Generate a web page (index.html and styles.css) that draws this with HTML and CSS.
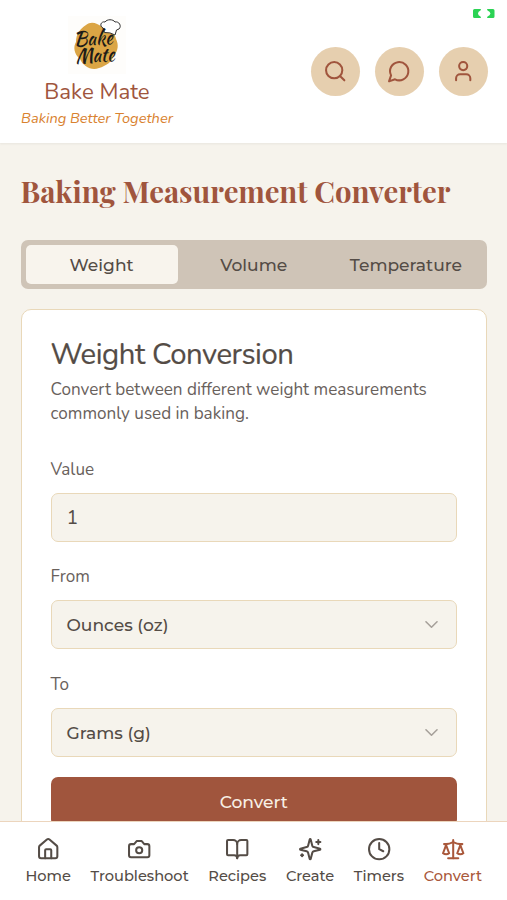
FILE: index.html
```html
<!DOCTYPE html>
<html lang="en">
<head>
    <meta charset="UTF-8">
    <meta name="viewport" content="width=device-width, initial-scale=1.0">
    <title>Bake Mate</title>
    <link rel="stylesheet" href="styles.css">
</head>
<body>
    <!-- Header -->
    <header class="header">
        <div class="brand">
            <svg class="logo" viewBox="0 0 58 58">
                <path fill="#dba545" d="M18 9C23 5 29 7 34 11C41 12 47 17 48 23C51 29 50 35 46 39C44 46 38 50 31 52C23 55 15 50 12 43C6 38 5 31 8 26C8 18 12 13 18 9Z"/>
                <path fill="#fff" stroke="#333" stroke-width="1" stroke-linejoin="round" d="M36.500 16.500L35 12C31 10 33 5 37 6C39 3 45 3 47 6C51 5 54 10 51 13L48.500 14L47 19Q42 16 36.500 16.500Z"/>
                <g class="logo-text">
                    <text x="6" y="29" textLength="39" lengthAdjust="spacingAndGlyphs" transform="rotate(-3 25 29)">Bake</text>
                    <text x="8" y="46" textLength="39" lengthAdjust="spacingAndGlyphs" transform="rotate(-3 25 46)">Mate</text>
                </g>
            </svg>
            <div class="brand-name">Bake Mate</div>
            <div class="tagline">Baking Better Together</div>
        </div>
        <div class="actions">
            <button class="round-btn" aria-label="Search">
                <svg class="icon" viewBox="0 0 24 24"><circle cx="11" cy="11" r="8"/><path d="m21 21-4.300-4.300"/></svg>
            </button>
            <button class="round-btn" aria-label="Messages">
                <svg class="icon" viewBox="0 0 24 24"><path d="M7.900 20A9 9 0 1 0 4 16.100L2 22Z"/></svg>
            </button>
            <button class="round-btn" aria-label="Profile">
                <svg class="icon" viewBox="0 0 24 24"><circle cx="12" cy="7" r="4"/><path d="M19 21v-2a4 4 0 0 0-4-4H9a4 4 0 0 0-4 4v2"/></svg>
            </button>
        </div>
        <svg class="battery" viewBox="0 0 22 9">
            <path d="M1.500 0H8L7.500 1.500Q5 2.500 5 4.500Q5 6.500 7.500 7.500L8 9H1.500Q0 9 0 7.500V1.500Q0 0 1.500 0ZM14 0H20Q21.500 0 21.500 1.500V7.500Q21.500 9 20 9H14L14.500 7.500Q17 6.500 17.500 4.500Q17 2.500 14.500 1.500Z"/>
        </svg>
    </header>

    <main class="content">
        <h1>Baking Measurement Converter</h1>

        <div class="tabs">
            <button class="tab active">Weight</button>
            <button class="tab">Volume</button>
            <button class="tab">Temperature</button>
        </div>

        <!-- Converter Card -->
        <section class="card">
            <h2>Weight Conversion</h2>
            <p class="description">Convert between different weight measurements commonly used in baking.</p>

            <div class="field">
                <label for="value">Value</label>
                <input type="text" id="value" class="control value-input" value="1">
            </div>
            <div class="field">
                <label for="from">From</label>
                <button id="from" class="control select">
                    <span>Ounces (oz)</span>
                    <svg class="chevron" viewBox="0 0 24 24"><path d="m5 8.500 7 7 7-7"/></svg>
                </button>
            </div>
            <div class="field">
                <label for="to">To</label>
                <button id="to" class="control select">
                    <span>Grams (g)</span>
                    <svg class="chevron" viewBox="0 0 24 24"><path d="m5 8.500 7 7 7-7"/></svg>
                </button>
            </div>
            <button class="convert-btn">Convert</button>
        </section>
    </main>

    <!-- Bottom Navigation -->
    <nav class="bottom-nav">
        <a class="nav-item">
            <svg class="icon" viewBox="0 0 24 24"><path d="M15 21v-8a1 1 0 0 0-1-1h-4a1 1 0 0 0-1 1v8"/><path d="M3 10a2 2 0 0 1 .709-1.528l7-6a2 2 0 0 1 2.582 0l7 6A2 2 0 0 1 21 10v9a2 2 0 0 1-2 2H5a2 2 0 0 1-2-2z"/></svg>
            <span>Home</span>
        </a>
        <a class="nav-item">
            <svg class="icon" viewBox="0 0 24 24"><path d="M14.500 4h-5L7 7H4a2 2 0 0 0-2 2v9a2 2 0 0 0 2 2h16a2 2 0 0 0 2-2V9a2 2 0 0 0-2-2h-3z"/><circle cx="12" cy="13" r="3"/></svg>
            <span>Troubleshoot</span>
        </a>
        <a class="nav-item">
            <svg class="icon" viewBox="0 0 24 24"><path d="M12 7v14"/><path d="M3 18a1 1 0 0 1-1-1V4a1 1 0 0 1 1-1h5a4 4 0 0 1 4 4 4 4 0 0 1 4-4h5a1 1 0 0 1 1 1v13a1 1 0 0 1-1 1h-6a3 3 0 0 0-3 3 3 3 0 0 0-3-3z"/></svg>
            <span>Recipes</span>
        </a>
        <a class="nav-item">
            <svg class="icon" viewBox="0 0 24 24"><path d="M9.937 15.500A2 2 0 0 0 8.500 14.063l-6.135-1.582a.5.5 0 0 1 0-.962L8.500 9.936A2 2 0 0 0 9.937 8.500l1.582-6.135a.5.5 0 0 1 .963 0L14.063 8.500A2 2 0 0 0 15.500 9.937l6.135 1.581a.5.5 0 0 1 0 .964L15.500 14.063a2 2 0 0 0-1.437 1.437l-1.582 6.135a.5.5 0 0 1-.963 0z"/><path d="M20 3v4"/><path d="M22 5h-4"/><path d="M4 17v2"/><path d="M5 18H3"/></svg>
            <span>Create</span>
        </a>
        <a class="nav-item">
            <svg class="icon" viewBox="0 0 24 24"><circle cx="12" cy="12" r="10"/><path d="M12 6v6l4 2"/></svg>
            <span>Timers</span>
        </a>
        <a class="nav-item current">
            <svg class="icon" viewBox="0 0 24 24"><path d="m16 16 3-8 3 8c-.87.65-1.920 1-3 1s-2.130-.35-3-1Z"/><path d="m2 16 3-8 3 8c-.87.65-1.920 1-3 1s-2.130-.35-3-1Z"/><path d="M7 21h10"/><path d="M12 3v18"/><path d="M3 7h2c2 0 5-1 7-2 2 1 5 2 7 2h2"/></svg>
            <span>Convert</span>
        </a>
    </nav>
</body>
</html>
```

FILE: styles.css
```css
* {
    box-sizing: border-box;
}
body {
    margin: 0;
    height: 100vh;
    display: flex;
    flex-direction: column;
    overflow: hidden;
    background-color: #f6f3ec;
    color: #544c46;
    font-family: Nunito, Lato, sans-serif;
}
button {
    border: none;
    padding: 0;
    color: inherit;
    font-family: Montserrat, Inter, sans-serif;
    font-weight: 500;
    cursor: pointer;
}
.icon {
    display: block;
    width: 24.4px;
    height: 24.4px;
    fill: none;
    stroke: currentColor;
    stroke-width: 2;
    stroke-linecap: round;
    stroke-linejoin: round;
}

/* Header */
.header {
    position: relative;
    display: flex;
    justify-content: space-between;
    align-items: center;
    height: 143px;
    flex: none;
    padding: 0 19.5px 0 21px;
    background-color: #fff;
    box-shadow: 0 1px 2px rgba(80, 72, 66, 0.08);
}
.brand {
    display: flex;
    flex-direction: column;
    align-items: center;
    width: 152px;
    padding-top: 1px;
}
.logo {
    width: 58px;
    height: 58px;
    background-color: #fefdfb;
}
.logo-text {
    font-family: "Kaushan Script", Pacifico, "Dancing Script", Lato, sans-serif;
    font-size: 20px;
    font-weight: 400;
    fill: #1d1b17;
}
.brand-name {
    padding-top: 1px;
    color: #a0553d;
    font-size: 22.2px;
    line-height: 34px;
    white-space: nowrap;
}
.tagline {
    margin-top: -1px;
    color: #d9822f;
    font-size: 14.6px;
    font-style: italic;
    line-height: 20px;
    white-space: nowrap;
}
.actions {
    display: flex;
    gap: 14.7px;
}
.round-btn {
    display: flex;
    justify-content: center;
    align-items: center;
    width: 49px;
    height: 49px;
    border-radius: 50%;
    background-color: #e6cfaf;
    color: #a0553d;
}
.battery {
    position: absolute;
    top: 9px;
    right: 12px;
    width: 22px;
    height: 9px;
    fill: #2bd354;
}

/* Content */
.content {
    flex: 1;
    min-height: 0;
    overflow: hidden;
    padding: 28px 20px 0 20.5px;
}
h1 {
    margin: 0 0 30px;
    color: #a0553d;
    font-family: "Playfair Display", "Liberation Serif", serif;
    font-size: 29.3px;
    font-weight: 700;
    line-height: 39px;
    white-space: nowrap;
}
.tabs {
    display: grid;
    grid-template-columns: repeat(3, 1fr);
    height: 49px;
    padding: 5px;
    border-radius: 7px;
    background-color: #cfc4b7;
}
.tab {
    border-radius: 5px;
    background: none;
    font-size: 17.1px;
}
.tab.active {
    background-color: #f8f4ed;
}

/* Card */
.card {
    margin-top: 20px;
    height: 600px;
    padding: 30px 29px;
    border: 1px solid #e9d8b9;
    border-radius: 10px;
    background-color: #fff;
}
h2 {
    margin: 0;
    font-size: 29.3px;
    font-weight: 400;
    line-height: 29px;
    letter-spacing: -0.45px;
    -webkit-text-stroke: 0.2px;
}
.description {
    margin: 9px 0 27px;
    color: #69615c;
    font-size: 17.1px;
    line-height: 24.4px;
}
.field {
    margin-bottom: 19.6px;
}
label {
    display: block;
    margin-bottom: 8px;
    color: #69615c;
    font-size: 17.1px;
    line-height: 31px;
}
.control {
    width: 100%;
    height: 49px;
    padding: 0 15px;
    border: 1px solid #e9d8b9;
    border-radius: 7px;
    background-color: #f6f3ec;
    color: #544c46;
}
.value-input {
    display: block;
    font-family: Nunito, Lato, sans-serif;
    font-size: 19.5px;
}
.select {
    display: flex;
    justify-content: space-between;
    align-items: center;
    font-size: 17.1px;
}
.chevron {
    width: 19px;
    height: 19px;
    fill: none;
    stroke: #a6a09a;
    stroke-width: 2;
    stroke-linecap: round;
    stroke-linejoin: round;
}
.convert-btn {
    display: block;
    width: 100%;
    height: 49px;
    border-radius: 7px;
    background-color: #a0553d;
    color: #f8f0e6;
    font-size: 17.1px;
}

/* Bottom Navigation */
.bottom-nav {
    display: flex;
    justify-content: space-between;
    flex: none;
    height: 79px;
    padding: 15px 25px 0 25.5px;
    border-top: 1px solid #ecd5bd;
    background-color: #fff;
}
.nav-item {
    display: flex;
    flex-direction: column;
    align-items: center;
    gap: 5px;
    font-family: Montserrat, Inter, sans-serif;
    font-size: 14.6px;
    font-weight: 500;
    line-height: 20px;
}
.nav-item.current {
    color: #a9583b;
}
```
